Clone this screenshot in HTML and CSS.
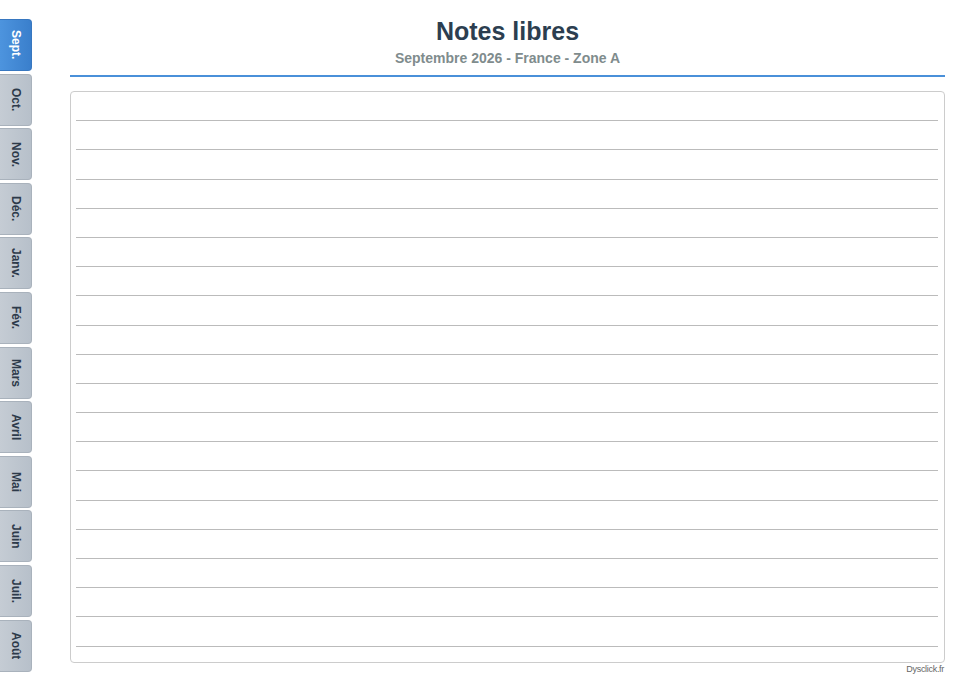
FILE: index.html
```html
<!DOCTYPE html>
<html lang="fr">
<head>
<meta charset="UTF-8">
<title>Notes libres</title>
<link rel="stylesheet" href="styles.css">
</head>
<body>
<div class="page">
    <ul class="months">
        <li class="tab active">Sept.</li>
        <li class="tab">Oct.</li>
        <li class="tab">Nov.</li>
        <li class="tab">Déc.</li>
        <li class="tab">Janv.</li>
        <li class="tab">Fév.</li>
        <li class="tab">Mars</li>
        <li class="tab">Avril</li>
        <li class="tab">Mai</li>
        <li class="tab">Juin</li>
        <li class="tab">Juil.</li>
        <li class="tab">Août</li>
    </ul>

    <div class="main">
        <div class="head">
            <h1>Notes libres</h1>
            <p class="sub">Septembre 2026 - France - Zone A</p>
        </div>
        <div class="sheet">
            <div class="line"></div>
            <div class="line"></div>
            <div class="line"></div>
            <div class="line"></div>
            <div class="line"></div>
            <div class="line"></div>
            <div class="line"></div>
            <div class="line"></div>
            <div class="line"></div>
            <div class="line"></div>
            <div class="line"></div>
            <div class="line"></div>
            <div class="line"></div>
            <div class="line"></div>
            <div class="line"></div>
            <div class="line"></div>
            <div class="line"></div>
            <div class="line"></div>
            <div class="line"></div>
        </div>
        <div class="foot">Dysclick.fr</div>
    </div>
</div>
</body>
</html>
```

FILE: styles.css
```css
body{
    margin: 0;
    font-family: "Liberation Sans", Arial, sans-serif;
    background: #fff;
}
.page{
    display: flex;
    gap: 38px;
}
.months{
    margin: 0;
    padding: 19px 0 0 0;
    list-style: none;
    display: flex;
    flex-direction: column;
    gap: 2.6px;
    width: 32px;
}
.tab{
    box-sizing: border-box;
    height: 52px;
    width: 32px;
    border: 1px solid #a9b2bc;
    border-left: none;
    border-radius: 0 4px 4px 0;
    background: linear-gradient(to right, #c5ccd4, #b7c0ca);
    color: #2d3a4a;
    font-size: 12px;
    font-weight: bold;
    writing-mode: vertical-rl;
    display: flex;
    align-items: center;
    justify-content: center;
}
.tab.active{
    background: linear-gradient(to right, #4d94de, #3a7fcc);
    border-color: #3777c0;
    color: #fff;
}
.main{
    width: 875px;
}
.head{
    text-align: center;
    border-bottom: 2px solid #4a90d9;
    padding: 16px 0 9px 0;
}
.head h1{
    margin: 0;
    font-size: 25px;
    line-height: 30px;
    color: #2c3e50;
}
.sub{
    margin: 4px 0 0 0;
    font-size: 14px;
    line-height: 16px;
    font-weight: bold;
    color: #7f8c8d;
}
.sheet{
    margin-top: 14px;
    border: 1px solid #ccc;
    border-radius: 4px;
    padding: 0 6px 15px 5px;
}
.line{
    box-sizing: border-box;
    height: 29.2px;
    border-bottom: 1px solid #bbb;
}
.foot{
    text-align: right;
    font-size: 9px;
    letter-spacing: -0.3px;
    color: #666;
    padding: 1px 1px 0 0;
}
```
